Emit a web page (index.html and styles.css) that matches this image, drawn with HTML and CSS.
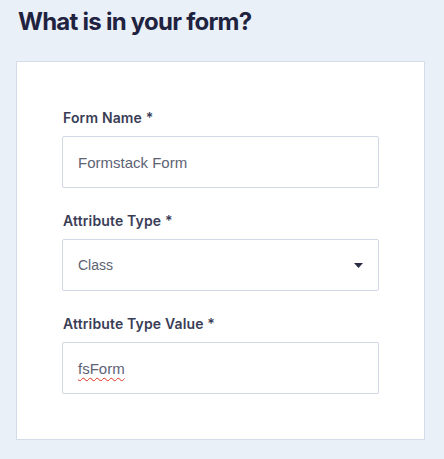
FILE: index.html
```html
<!DOCTYPE html>
<html lang="en">
<head>
<meta charset="utf-8">
<title>What is in your form?</title>
<link rel="stylesheet" href="styles.css">
</head>
<body>
<div class="page">
  <div class="header">
    <h1 class="title">What is in your form?</h1>
  </div>
  <form class="card">
    <div class="field">
      <label class="label" for="form-name">Form Name *</label>
      <input class="control" id="form-name" type="text" value="Formstack Form">
    </div>
    <div class="field">
      <label class="label" for="attr-type">Attribute Type *</label>
      <div class="select-wrap">
        <select class="control select" id="attr-type">
          <option>Class</option>
          <option>ID</option>
        </select>
        <svg class="caret" width="9" height="5" viewBox="0 0 9 5"><path d="M0 0H9L4.5 5Z" fill="#2b2e42"/></svg>
      </div>
    </div>
    <div class="field">
      <label class="label" for="attr-value">Attribute Type Value *</label>
      <div class="control fake-input" id="attr-value"><span class="misspelled">fsForm</span></div>
    </div>
  </form>
</div>
</body>
</html>
```
FILE: styles.css
```css
html, body {
  margin: 0;
  padding: 0;
  background: #e9f0f8;
}
body {
  font-family: Inter, "Open Sans", sans-serif;
  color: #21253d;
}
.page {
  width: 444px;
  height: 459px;
  overflow: hidden;
}
.header {
  height: 61px;
  padding-left: 18px;
  box-sizing: border-box;
}
.title {
  margin: 0;
  padding-top: 7px;
  font-size: 24px;
  line-height: 30px;
  font-weight: 700;
  letter-spacing: -0.75px;
  color: #1f2340;
}
.card {
  margin: 0 20px 0 16px;
  width: 409px;
  height: 379px;
  box-sizing: border-box;
  background: #ffffff;
  border: 1px solid #d3dce8;
  padding: 46px 45px 45px;
  display: flex;
  flex-direction: column;
  gap: 23px;
}
.field {
  display: flex;
  flex-direction: column;
  gap: 8px;
}
.label {
  font-family: Inter, sans-serif;
  font-size: 14px;
  line-height: 20px;
  font-weight: 600;
  color: #3a3d56;
  letter-spacing: 0.15px;
  padding-left: 1px;
}
.control {
  display: flex;
  align-items: center;
  width: 317px;
  height: 52px;
  box-sizing: border-box;
  border: 1px solid #cfd8e4;
  border-radius: 2px;
  background: #fff;
  padding: 0 15px;
  font-family: "Liberation Sans", Arial, sans-serif;
  font-size: 15px;
  color: #5d6274;
  margin: 0;
  outline: none;
}
.select-wrap {
  position: relative;
  width: 317px;
}
.select {
  appearance: none;
  -webkit-appearance: none;
  font-size: 14px;
}
.caret {
  position: absolute;
  right: 16px;
  top: 24px;
}
.misspelled {
  text-decoration: underline wavy #e0301e;
  text-decoration-thickness: 1px;
  text-underline-offset: 3px;
}
```
